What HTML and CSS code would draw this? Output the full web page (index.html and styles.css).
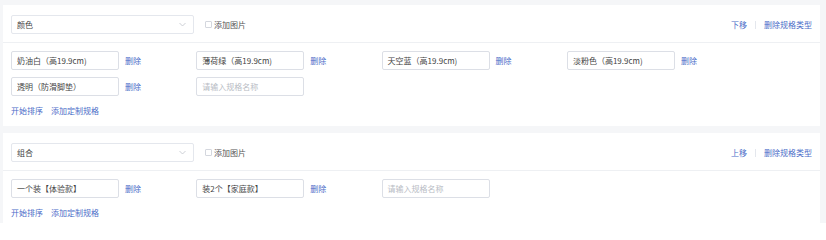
FILE: index.html
```html
<!DOCTYPE html>
<html lang="zh-CN">
<head>
<meta charset="utf-8">
<link rel="stylesheet" href="styles.css">
</head>
<body>
<div class="wrap">
  <section class="card">
    <div class="card-head">
      <div class="select"><span>颜色</span><svg class="chev" width="7" height="5" viewBox="0 0 7 5"><path d="M0.5 1 L3.5 4 L6.5 1" fill="none" stroke="#c0c4cc" stroke-width="0.8"/></svg></div>
      <label class="check"><span class="box"></span>添加图片</label>
      <div class="ops"><a class="link">下移</a><span class="sep"></span><a class="link">删除规格类型</a></div>
    </div>
    <div class="card-body">
      <div class="grid">
        <div class="cell"><div class="input">奶油白（高19.9cm)</div><a class="link">删除</a></div>
        <div class="cell"><div class="input">薄荷绿（高19.9cm)</div><a class="link">删除</a></div>
        <div class="cell"><div class="input">天空蓝（高19.9cm)</div><a class="link">删除</a></div>
        <div class="cell"><div class="input">淡粉色（高19.9cm)</div><a class="link">删除</a></div>
        <div class="cell"><div class="input">透明（防滑脚垫）</div><a class="link">删除</a></div>
        <div class="cell"><div class="input placeholder">请输入规格名称</div></div>
      </div>
      <div class="foot"><a class="link">开始排序</a><a class="link">添加定制规格</a></div>
    </div>
  </section>
  <section class="card card-last">
    <div class="card-head">
      <div class="select"><span>组合</span><svg class="chev" width="7" height="5" viewBox="0 0 7 5"><path d="M0.5 1 L3.5 4 L6.5 1" fill="none" stroke="#c0c4cc" stroke-width="0.8"/></svg></div>
      <label class="check"><span class="box"></span>添加图片</label>
      <div class="ops"><a class="link">上移</a><span class="sep"></span><a class="link">删除规格类型</a></div>
    </div>
    <div class="card-body">
      <div class="grid">
        <div class="cell"><div class="input">一个装【体验款】</div><a class="link">删除</a></div>
        <div class="cell"><div class="input">装2个【家庭款】</div><a class="link">删除</a></div>
        <div class="cell"><div class="input placeholder">请输入规格名称</div></div>
      </div>
      <div class="foot"><a class="link">开始排序</a><a class="link">添加定制规格</a></div>
    </div>
  </section>
</div>
</body>
</html>
```

FILE: styles.css
```css
html, body {
  margin: 0;
  padding: 0;
  background: #ffffff;
}
body {
  font-family: "Noto Sans CJK SC", "Noto Sans", sans-serif;
  font-size: 8px;
  color: #444444;
}
.wrap {
  background: #f5f6f8;
  padding: 5px 6px 0 3px;
  display: flex;
  flex-direction: column;
  gap: 7px;
}
.card {
  background: #ffffff;
}
.card-head {
  height: 38px;
  box-sizing: border-box;
  padding: 10px 8px 0 8px;
  border-bottom: 1px solid #eef0f3;
  display: flex;
  align-items: flex-start;
}
.select {
  width: 183px;
  height: 19px;
  box-sizing: border-box;
  border: 1px solid #e4e7ed;
  border-radius: 2px;
  padding: 0 7px 0 5px;
  display: flex;
  align-items: center;
  justify-content: space-between;
  line-height: 17px;
}
.check {
  margin-left: 11px;
  height: 19px;
  display: flex;
  align-items: center;
  gap: 2px;
  color: #555555;
}
.box {
  width: 7px;
  height: 7px;
  border: 1px solid #d4d7de;
  border-radius: 1px;
  box-sizing: border-box;
}
.ops {
  margin-left: auto;
  height: 19px;
  display: flex;
  align-items: center;
  gap: 8px;
}
.sep {
  width: 1px;
  height: 8px;
  background: #e4e7ed;
}
.link {
  color: #4a6cc8;
  cursor: pointer;
  line-height: 16px;
}
.card-body {
  padding: 8px 8px 7px 8px;
}
.card-last .card-body {
  padding-bottom: 2px;
}
.grid {
  display: grid;
  grid-template-columns: repeat(4, 185.3px);
  grid-auto-rows: 19px;
  row-gap: 7px;
}
.cell {
  display: flex;
  align-items: center;
  gap: 6px;
}
.input {
  width: 108px;
  height: 19px;
  box-sizing: border-box;
  border: 1px solid #dcdfe6;
  border-radius: 2px;
  padding: 0 5px;
  line-height: 17px;
  white-space: nowrap;
  overflow: hidden;
}
.placeholder {
  color: #b8bcc4;
}
.foot {
  margin-top: 7px;
  display: flex;
  gap: 8px;
  height: 16px;
}
```
